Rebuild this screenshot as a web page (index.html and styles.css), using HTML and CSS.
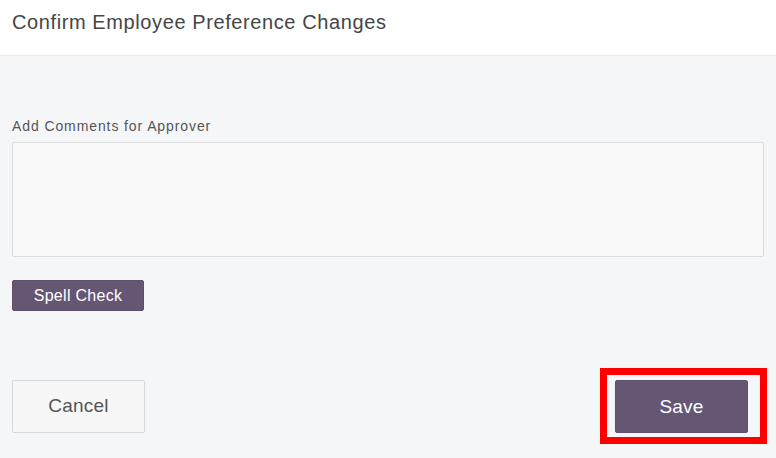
FILE: index.html
```html
<!DOCTYPE html>
<html>
<head>
<meta charset="utf-8">
<link rel="stylesheet" href="styles.css">
</head>
<body>
<header class="header">
  <h1 class="title">Confirm Employee Preference Changes</h1>
</header>
<main class="content">
  <label class="label" for="comments">Add Comments for Approver</label>
  <textarea id="comments" class="comments"></textarea>
  <button class="btn btn-primary btn-small">Spell Check</button>
  <div class="footer">
    <button class="btn btn-default btn-large">Cancel</button>
    <span class="highlight">
      <button class="btn btn-primary btn-large">Save</button>
    </span>
  </div>
</main>
</body>
</html>
```

FILE: styles.css
```css
html, body {
  margin: 0;
  padding: 0;
}
body {
  width: 776px;
  height: 458px;
  overflow: hidden;
  background: #f5f6f8;
  font-family: "Liberation Sans", Arial, sans-serif;
}
.header {
  background: #ffffff;
  height: 56px;
  border-bottom: 1px solid #ebebeb;
  box-sizing: border-box;
  padding: 0 12px;
}
.title {
  margin: 0;
  padding-top: 10px;
  font-size: 20px;
  line-height: 24px;
  font-weight: normal;
  letter-spacing: 0.6px;
  color: #454545;
}
.content {
  display: flex;
  flex-direction: column;
  align-items: flex-start;
  padding: 0 12px;
}
.label {
  margin-top: 62px;
  font-size: 14px;
  line-height: 16px;
  letter-spacing: 0.9px;
  color: #555555;
}
.comments {
  margin-top: 8px;
  width: 752px;
  height: 115px;
  box-sizing: border-box;
  border: 1px solid #dcdcdc;
  border-radius: 2px;
  background: #f9f9f9;
  resize: none;
  padding: 6px;
}
.btn {
  font-family: "Liberation Sans", Arial, sans-serif;
  border-radius: 2px;
  box-sizing: border-box;
  cursor: pointer;
  padding: 0;
}
.btn-primary {
  background: #655673;
  border: 1px solid #5e506c;
  color: #ffffff;
}
.btn-default {
  background: #f7f7f7;
  border: 1px solid #d9d9d9;
  color: #555555;
}
.btn-small {
  margin-top: 23px;
  width: 132px;
  height: 31px;
  font-size: 16px;
  letter-spacing: 0.3px;
}
.btn-large {
  width: 133px;
  height: 53px;
  font-size: 19px;
  letter-spacing: 0.2px;
}
.footer {
  align-self: stretch;
  margin-top: 57px;
  margin-right: -3px;
  display: flex;
  justify-content: space-between;
  align-items: center;
}
.highlight {
  display: flex;
  border: 7px solid #ff0000;
  padding: 5px 12px 4px 8px;
  background: transparent;
}
```
